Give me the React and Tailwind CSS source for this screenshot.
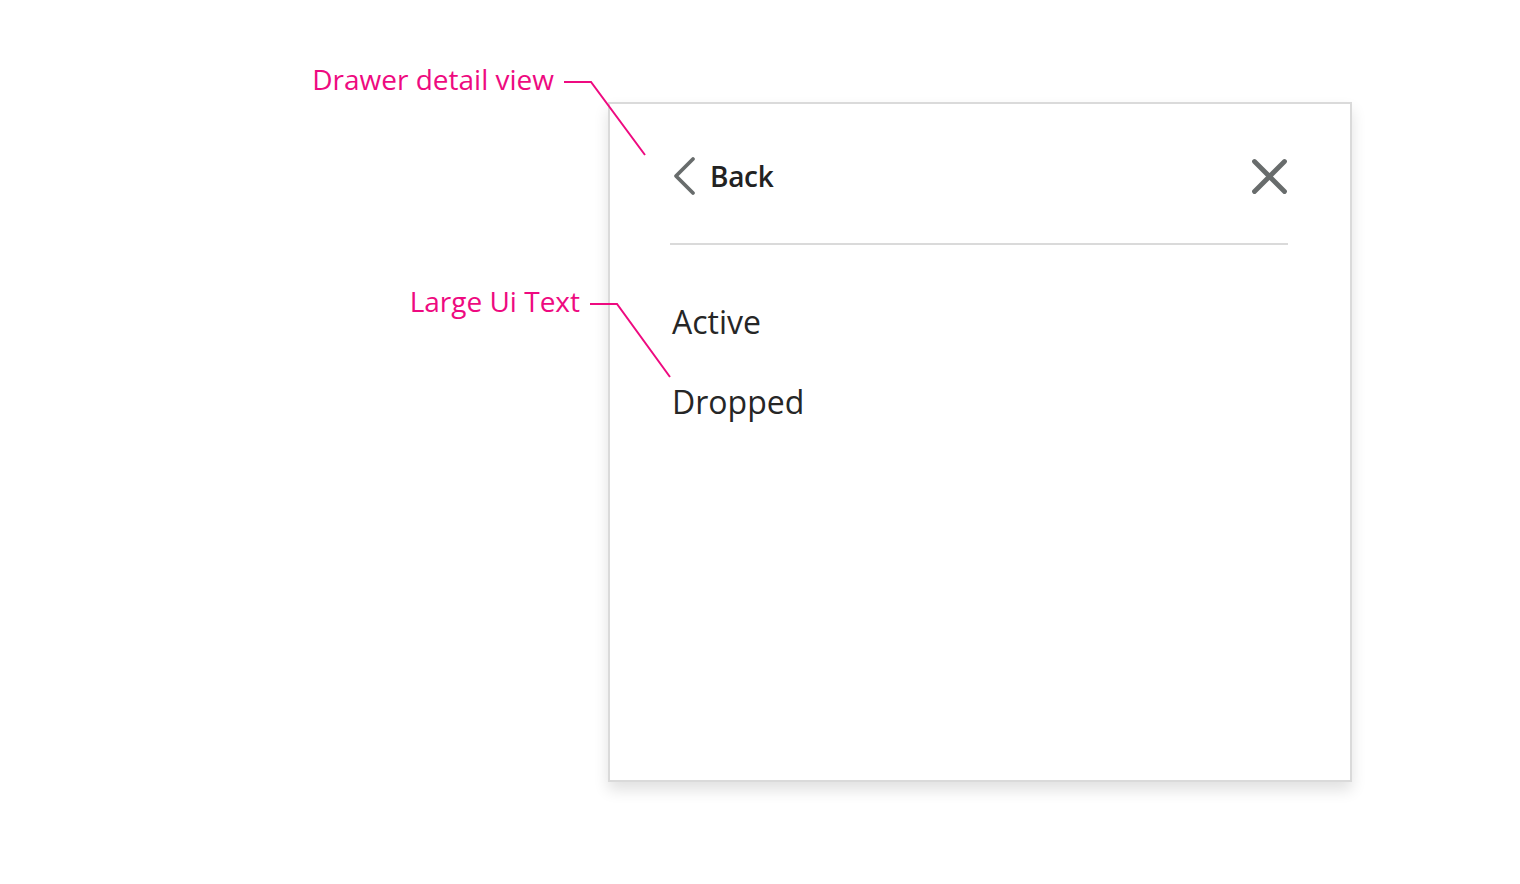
import React from "react";

const font = { fontFamily: '"Open Sans", "Noto Sans", sans-serif' };

// Callout label with leader line (annotation layer over the mockup)
const Callout = ({ label, right, top, x1, y1, x2, y2 }) => (
  <div className="absolute inset-0 pointer-events-none">
    <div
      className="absolute text-[28px] leading-none text-[#ee0a80] whitespace-nowrap"
      style={{ right, top }}
    >
      {label}
    </div>
    <svg className="absolute inset-0" width="1520" height="884">
      <polyline
        points={`${x1},${y1} ${x1 + 27},${y1} ${x2},${y2}`}
        fill="none"
        stroke="#ee0a80"
        strokeWidth="2"
      />
    </svg>
  </div>
);

export default function App() {
  const items = ["Active", "Dropped"];

  return (
    <div className="relative w-[1520px] h-[884px] bg-white overflow-hidden" style={font}>
      <div className="pl-[608px] pt-[102px]">
        <div className="w-[744px] h-[680px] bg-white border-2 border-[#dadada] shadow-[0_8px_14px_rgba(0,0,0,0.12)]">
          <div className="pl-[60px] pr-[62px]">
            {/* header */}
            <div className="flex items-center justify-between pt-[52px] pb-[47px] border-b-2 border-[#dadada]">
              <button className="flex items-center gap-[14px]">
                <svg width="26" height="40" viewBox="0 0 26 40">
                  <polyline
                    points="23,3 6,20 23,37"
                    fill="none"
                    stroke="#686c6c"
                    strokeWidth="3.8"
                    strokeLinecap="round"
                    strokeLinejoin="round"
                  />
                </svg>
                <span className="text-[28px] font-semibold text-[#222] leading-none tracking-[-0.3px]">Back</span>
              </button>
              <button className="-mr-[1px]">
                <svg width="40" height="40" viewBox="0 0 40 40">
                  <path
                    d="M5.5 5.5 L35.5 35.5 M35.5 5.5 L5.5 35.5"
                    fill="none"
                    stroke="#686c6c"
                    strokeWidth="4.8"
                    strokeLinecap="round"
                  />
                </svg>
              </button>
            </div>

            {/* list */}
            <div className="flex flex-col gap-[40px] mt-[57px] ml-[2px]">
              {items.map((it) => (
                <div key={it} className="text-[32px] leading-[40px] text-[#262626]">
                  {it}
                </div>
              ))}
            </div>
          </div>
        </div>
      </div>

      <Callout label="Drawer detail view" right={966} top={65} x1={564} y1={82} x2={645} y2={155} />
      <Callout label="Large Ui Text" right={940} top={287} x1={590} y1={304} x2={670} y2={377} />
    </div>
  );
}
